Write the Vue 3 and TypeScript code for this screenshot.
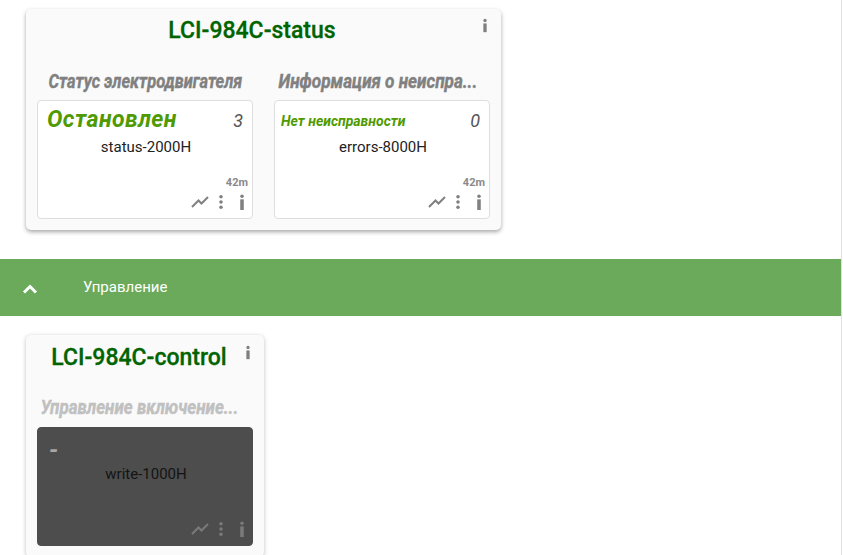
<template>
  <div class="page">
    <section class="card wide">
      <header class="card-head">
        <h2>LCI-984C-status</h2>
        <svg class="head-info" viewBox="0 0 8 18"><circle cx="4" cy="3" r="2" /><rect x="2" y="6.5" width="4" height="10.5" /></svg>
      </header>
      <div class="cells">
        <div v-for="t in statusTiles" :key="t.name" class="cell">
          <div :class="['cell-label', t.labelClass]"><span>{{ t.label }}</span></div>
          <div class="tile">
            <div class="tile-top">
              <span :class="['value', t.small ? 'small' : '']">{{ t.value }}</span>
              <span class="count">{{ t.count }}</span>
            </div>
            <div class="name">{{ t.name }}</div>
            <div class="age">42m</div>
            <div class="tools">
              <svg class="i-chart" viewBox="0 0 18 14"><polyline points="1,12 7.5,5.5 10.5,8.5 17,2" /></svg>
              <svg class="i-dots" viewBox="0 0 6 18"><circle cx="3" cy="3" r="2" /><circle cx="3" cy="9" r="2" /><circle cx="3" cy="15" r="2" /></svg>
              <svg class="i-info" viewBox="0 0 6 18"><circle cx="3" cy="2.5" r="2" /><rect x="1" y="6" width="4" height="12" /></svg>
            </div>
          </div>
        </div>
      </div>
    </section>

    <div class="band">
      <svg class="chevron" viewBox="0 0 16 10"><polyline points="2,8.5 8,2.5 14,8.5" /></svg>
      <span>Управление</span>
    </div>

    <section class="card narrow">
      <header class="card-head">
        <h2>LCI-984C-control</h2>
        <svg class="head-info" viewBox="0 0 8 18"><circle cx="4" cy="3" r="2" /><rect x="2" y="6.5" width="4" height="10.5" /></svg>
      </header>
      <div class="cells">
        <div class="cell">
          <div class="cell-label faded"><span>Управление включение...</span></div>
          <div class="tile dark">
            <div class="tile-top">
              <span class="value dash">-</span>
            </div>
            <div class="name">write-1000H</div>
            <div class="age"></div>
            <div class="tools">
              <svg class="i-chart" viewBox="0 0 18 14"><polyline points="1,12 7.5,5.5 10.5,8.5 17,2" /></svg>
              <svg class="i-dots" viewBox="0 0 6 18"><circle cx="3" cy="3" r="2" /><circle cx="3" cy="9" r="2" /><circle cx="3" cy="15" r="2" /></svg>
              <svg class="i-info" viewBox="0 0 6 18"><circle cx="3" cy="2.5" r="2" /><rect x="1" y="6" width="4" height="12" /></svg>
            </div>
          </div>
        </div>
      </div>
    </section>
  </div>
</template>

<script setup lang="ts">
const statusTiles = [
  { label: 'Статус электродвигателя', labelClass: 'first', value: 'Остановлен', count: 3, name: 'status-2000H', small: false },
  { label: 'Информация о неиспра...', labelClass: 'second', value: 'Нет неисправности', count: 0, name: 'errors-8000H', small: true }
]
</script>

<style>
html, body {
  margin: 0;
  background: #fff;
  overflow: hidden;
}
</style>

<style scoped>
.page {
  width: 842px;
  height: 555px;
  border-right: 1px solid #e0e0e0;
  padding-top: 9px;
  box-sizing: border-box;
  overflow: hidden;
  font-family: Roboto, "Liberation Sans", sans-serif;
}

.card {
  margin-left: 26px;
  padding: 0 11px 11px;
  background: #fafafa;
  border-radius: 5px;
  box-shadow: 0 2px 4px rgba(0, 0, 0, 0.35);
  box-sizing: border-box;
}

.wide {
  width: 475px;
}

.narrow {
  width: 238px;
  box-shadow: 0 1px 4px rgba(0, 0, 0, 0.25);
}

.card-head {
  height: 43px;
  position: relative;
  display: flex;
  justify-content: center;
  align-items: center;
  padding-right: 23px;
}

.narrow .card-head {
  padding-right: 12px;
  padding-top: 2px;
  box-sizing: border-box;
}

h2 {
  margin: 0;
  font-size: 23px;
  font-weight: 500;
  color: #006400;
  white-space: nowrap;
  -webkit-text-stroke: 0.3px #006400;
}

.head-info {
  position: absolute;
  right: 1px;
  top: 9px;
  width: 8px;
  height: 15px;
  fill: #808080;
}

.narrow .head-info {
  top: 10px;
  right: 1px;
}

.cells {
  display: flex;
  gap: 21px;
  padding-top: 15px;
}

.cell {
  width: 216px;
}

.cell-label {
  height: 33px;
  display: flex;
  justify-content: center;
  font-size: 20px;
  font-style: italic;
  font-weight: 700;
  color: #808080;
  white-space: nowrap;
  line-height: 28px;
}

.cell-label span {
  display: inline-block;
  flex: none;
  transform: scaleX(0.825);
  -webkit-text-stroke: 0.4px currentColor;
}

.cell-label.second {
  padding-right: 8px;
  box-sizing: border-box;
}

.cell-label.second span {
  transform: scaleX(0.857);
}

.cell-label.faded {
  color: #c0c0c0;
  padding-right: 12px;
  height: 34px;
  box-sizing: border-box;
}

.cell-label.faded span {
  transform: scaleX(0.85);
}

.tile {
  height: 119px;
  background: #fff;
  border: 1px solid #dedede;
  border-radius: 4px;
  box-sizing: border-box;
  padding: 6px 7px 0 9px;
  display: flex;
  flex-direction: column;
}

.tile.dark {
  background: #4d4d4d;
  border-color: #4d4d4d;
}

.tile-top {
  height: 26px;
  display: flex;
  justify-content: space-between;
  align-items: center;
  font-style: italic;
}

.value {
  font-size: 23px;
  font-weight: 700;
  color: #4f9a00;
  letter-spacing: 0.45px;
  margin-top: -2px;
}

.value.small {
  font-size: 14px;
  margin-left: -3px;
  margin-top: 1px;
  letter-spacing: 0;
}

.value.dash {
  color: #a8a8a8;
  margin-left: 2px;
  margin-top: 6px;
  letter-spacing: 0;
  font-size: 24px;
  line-height: 24px;
}

.count {
  font-size: 18px;
  color: #555;
  margin-right: 2px;
}

.name {
  margin-top: 4px;
  text-align: center;
  font-size: 15px;
  line-height: 20px;
  color: #222;
}

.dark .name {
  color: #141414;
}

.age {
  margin-top: 19px;
  height: 13px;
  text-align: right;
  font-size: 11px;
  font-weight: 700;
  color: #8a8a8a;
  margin-right: -3px;
}

.tools {
  display: flex;
  justify-content: flex-end;
  align-items: center;
  margin-top: 4px;
  height: 18px;
}

.i-chart {
  width: 18px;
  height: 14px;
  fill: none;
  stroke: #808080;
  stroke-width: 2;
}

.i-dots {
  width: 6px;
  height: 16px;
  margin-left: 9px;
  fill: #808080;
}

.i-info {
  width: 6px;
  height: 16px;
  margin-left: 15px;
  fill: #808080;
}

.dark .i-chart {
  stroke: #7a7a7a;
}

.dark .i-dots,
.dark .i-info {
  fill: #7a7a7a;
}

.band {
  margin-top: 29px;
  width: 841px;
  height: 57px;
  background: #6aaa5a;
  color: #fff;
  display: flex;
  align-items: center;
  font-size: 15px;
  line-height: 17px;
  margin-bottom: 19px;
}

.band span {
  margin-top: -1px;
}

.chevron {
  width: 16px;
  height: 10px;
  margin-top: 2px;
  margin-left: 22px;
  margin-right: 45px;
  fill: none;
  stroke: #fff;
  stroke-width: 3;
}
</style>
